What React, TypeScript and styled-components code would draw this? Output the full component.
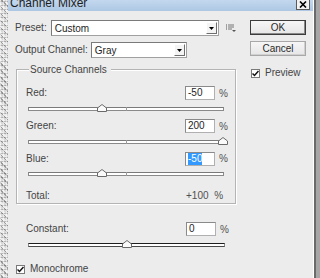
import React from 'react';
import styled, { createGlobalStyle } from 'styled-components';

const GlobalStyle = createGlobalStyle`
  html, body {
    margin: 0;
    padding: 0;
    background: #a6a6a6;
  }
  body {
    font-family: 'Liberation Sans', Arial, sans-serif;
    font-size: 10px;
    color: #444;
  }
`;

const Screen = styled.div`
  display: flex;
  width: 320px;
  height: 278px;
  overflow: hidden;
`;

const Backdrop = styled.div`
  width: 8px;
  flex: none;
  background:
    repeating-linear-gradient(90deg, rgba(255, 255, 255, 0.5) 0 1px, transparent 1px 3px),
    repeating-linear-gradient(0deg, rgba(90, 90, 90, 0.35) 0 1px, transparent 1px 4px),
    repeating-linear-gradient(45deg, #d8d8d8 0 2px, #9a9a9a 2px 3px, #ececec 3px 5px);
`;

const Dialog = styled.div`
  width: 305px;
  flex: none;
  display: flex;
  flex-direction: column;
  background: #ececec;
`;

const Edge = styled.div`
  flex: 1;
  border-left: 1px solid #ffffff;
  box-shadow: inset 2px 0 0 #6a6a6a;
  background: #a6a6a6;
`;

const TitleBar = styled.div`
  height: 11px;
  flex: none;
  display: flex;
  align-items: flex-start;
  justify-content: space-between;
  padding: 0 3px 0 2px;
  background: linear-gradient(#c3d8ee, #adc7e3);
  overflow: hidden;
`;

const Title = styled.span`
  margin-top: -4px;
  font-size: 12px;
  line-height: 14px;
  color: #1e1e1e;
`;

const CloseBox = styled.div`
  width: 12px;
  height: 9px;
  margin-top: -1px;
  display: flex;
  align-items: center;
  justify-content: center;
  border: 1px solid #5a5a5a;
  background: #f2f2f2;
`;

const Body = styled.div`
  flex: 1;
  display: flex;
  gap: 14px;
  padding: 9px 0 0 7px;
`;

const Main = styled.div`
  width: 221px;
  display: flex;
  flex-direction: column;
`;

const Side = styled.div`
  width: 56px;
  display: flex;
  flex-direction: column;
`;

const FieldRow = styled.div<{ $top?: number }>`
  display: flex;
  align-items: center;
  height: 16px;
  margin-top: ${(p) => p.$top ?? 0}px;
`;

const Label = styled.span`
  white-space: nowrap;
  line-height: 14px;
`;

const Select = styled.div<{ $width: number; $gap: number }>`
  width: ${(p) => p.$width}px;
  height: 16px;
  box-sizing: border-box;
  margin-left: ${(p) => p.$gap}px;
  display: flex;
  align-items: center;
  background: #fff;
  border: 1px solid #a0a0a0;
  border-top-color: #7a7a7a;
  border-left-color: #7a7a7a;
  padding-left: 3px;
  color: #1e1e1e;
`;

const SelectText = styled.span`
  flex: 1;
`;

const ArrowButton = styled.span`
  width: 11px;
  height: 12px;
  margin-right: 1px;
  box-sizing: border-box;
  display: flex;
  align-items: center;
  justify-content: center;
  background: #f4f4f4;
  border: 1px solid #fff;
  border-right-color: #6e6e6e;
  border-bottom-color: #6e6e6e;
`;

const MenuIcon = styled.span`
  margin-left: 7px;
  display: flex;
`;

const Button = styled.div<{ $default?: boolean }>`
  height: 15px;
  box-sizing: border-box;
  display: flex;
  align-items: center;
  justify-content: center;
  background: linear-gradient(#f6f6f6, #e6e6e6);
  border: 1px solid ${(p) => (p.$default ? '#3c3c3c' : '#a8a8a8')};
  box-shadow: inset -1px -1px 0 ${(p) => (p.$default ? '#8a8a8a' : '#d0d0d0')};
  color: #2a2a2a;
  margin-bottom: 6px;
`;

const CheckRow = styled.div<{ $top: number }>`
  display: flex;
  align-items: center;
  gap: 5px;
  margin-top: ${(p) => p.$top}px;
  margin-left: 1px;
`;

const CheckBox = styled.span`
  width: 9px;
  height: 9px;
  box-sizing: border-box;
  display: flex;
  align-items: center;
  justify-content: center;
  background: #fff;
  border: 1px solid #7a7a7a;
`;

const Group = styled.div`
  margin: 11px 0 0 1px;
  height: 135px;
  box-sizing: border-box;
  display: flex;
  flex-direction: column;
  padding: 0 3px 0 9px;
  border: 1px solid #b4b4b4;
  box-shadow: inset 1px 1px 0 #fff, 1px 1px 0 #fff;
`;

const Legend = styled.span`
  align-self: flex-start;
  margin: -7px 0 0 3px;
  padding: 0 4px 0 1px;
  line-height: 13px;
  background: #ececec;
`;

const ValueRow = styled.div<{ $top: number }>`
  display: grid;
  grid-template-columns: 1fr 30px 17px;
  align-items: center;
  height: 14px;
  margin-top: ${(p) => p.$top}px;
`;

const Input = styled.div`
  height: 14px;
  box-sizing: border-box;
  display: flex;
  align-items: center;
  padding-left: 2px;
  background: #fff;
  border: 1px solid #b0b0b0;
  border-top-color: #8a8a8a;
  border-left-color: #8a8a8a;
  color: #1e1e1e;
  line-height: 12px;
`;

const Selected = styled.span`
  background: #3399ff;
  color: #fff;
`;

const Percent = styled.span`
  padding-left: 4px;
  color: #505050;
`;

const TotalValue = styled.span`
  grid-column: 2 / 4;
  padding-left: 1px;
  color: #505050;
  word-spacing: 3px;
`;

const SliderArea = styled.div`
  height: 18px;
  display: flex;
  align-items: center;
  margin: 0 8px 0 2px;
`;

const Track = styled.div<{ $dark?: boolean }>`
  position: relative;
  flex: 1;
  height: 4px;
  box-sizing: border-box;
  background: #fff;
  border: 1px solid #8a8a8a;
  border-top-color: ${(p) => (p.$dark ? '#1e1e1e' : '#7a7a7a')};
  border-bottom-color: ${(p) => (p.$dark ? '#4a4a4a' : '#8a8a8a')};
`;

const Tick = styled.span`
  position: absolute;
  left: 50%;
  top: -1px;
  width: 1px;
  height: 4px;
  background: #9a9a9a;
`;

const Thumb = styled.svg`
  position: absolute;
  top: -4px;
  margin-left: -5px;
`;

const Constant = styled.div`
  display: flex;
  flex-direction: column;
  padding: 0 3px 0 11px;
`;

const Arrow = () => (
  <svg width="5" height="3" viewBox="0 0 5 3">
    <path d="M0 0H5L2.5 3Z" fill="#000" />
  </svg>
);

const Check = () => (
  <svg width="7" height="7" viewBox="0 0 7 7">
    <path d="M0.5 3.5L2.5 5.5L6.5 1" stroke="#111" strokeWidth="1.5" fill="none" />
  </svg>
);

const Slider: React.FC<{ value: number; dark?: boolean }> = ({ value, dark }) => {
  const pct = ((value + 200) / 400) * 100;
  return (
    <SliderArea>
      <Track $dark={dark}>
        <Tick />
        <Thumb width="10" height="8" viewBox="0 0 10 8" style={{ left: `${pct}%` }}>
          <path d="M0.5 7.5V4L5 0.5L9.5 4V7.5Z" fill="#fafafa" stroke="#6a6a6a" />
        </Thumb>
      </Track>
    </SliderArea>
  );
};

const channels = [
  { name: 'Red:', value: -50, top: 10 },
  { name: 'Green:', value: 200, top: 2 },
  { name: 'Blue:', value: -50, top: 1, selected: true },
];

export default function App() {
  return (
    <>
      <GlobalStyle />
      <Screen>
        <Backdrop />
        <Dialog>
          <TitleBar>
            <Title>Channel Mixer</Title>
            <CloseBox>
              <svg width="8" height="7" viewBox="0 0 8 7">
                <path d="M1 0.5L7 6.5M7 0.5L1 6.5" stroke="#000" strokeWidth="1.6" />
              </svg>
            </CloseBox>
          </TitleBar>
          <Body>
            <Main>
              <FieldRow>
                <Label>Preset:</Label>
                <Select $width={168} $gap={4}>
                  <SelectText>Custom</SelectText>
                  <ArrowButton>
                    <Arrow />
                  </ArrowButton>
                </Select>
                <MenuIcon>
                  <svg width="10" height="8" viewBox="0 0 10 8">
                    <path d="M0 1H1M0 3H1M0 5H1" stroke="#555" />
                    <path d="M2 1H8M2 3H8M2 5H6" stroke="#777" />
                    <path d="M6 6H10L8 8Z" fill="#555" />
                  </svg>
                </MenuIcon>
              </FieldRow>
              <FieldRow $top={6}>
                <Label>Output Channel:</Label>
                <Select $width={96} $gap={3}>
                  <SelectText>Gray</SelectText>
                  <ArrowButton>
                    <Arrow />
                  </ArrowButton>
                </Select>
              </FieldRow>
              <Group>
                <Legend>Source Channels</Legend>
                {channels.map((c) => (
                  <React.Fragment key={c.name}>
                    <ValueRow $top={c.top}>
                      <Label>{c.name}</Label>
                      <Input>{c.selected ? <Selected>{c.value}</Selected> : c.value}</Input>
                      <Percent>%</Percent>
                    </ValueRow>
                    <Slider value={c.value} />
                  </React.Fragment>
                ))}
                <ValueRow $top={6}>
                  <Label>Total:</Label>
                  <TotalValue>+100 %</TotalValue>
                </ValueRow>
              </Group>
              <Constant>
                <ValueRow $top={18}>
                  <Label>Constant:</Label>
                  <Input>0</Input>
                  <Percent>%</Percent>
                </ValueRow>
                <Slider value={0} dark />
              </Constant>
              <CheckRow $top={8}>
                <CheckBox>
                  <Check />
                </CheckBox>
                <Label>Monochrome</Label>
              </CheckRow>
            </Main>
            <Side>
              <Button $default>OK</Button>
              <Button>Cancel</Button>
              <CheckRow $top={4}>
                <CheckBox>
                  <Check />
                </CheckBox>
                <Label>Preview</Label>
              </CheckRow>
            </Side>
          </Body>
        </Dialog>
        <Edge />
      </Screen>
    </>
  );
}
